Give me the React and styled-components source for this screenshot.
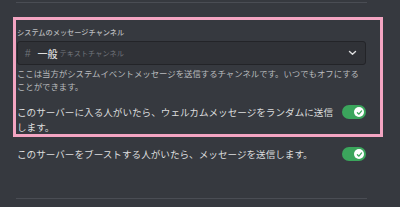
import React from "react";
import styled, { createGlobalStyle } from "styled-components";

const GlobalStyle = createGlobalStyle`
  html, body {
    margin: 0;
    padding: 0;
    background: #36393f;
    font-family: "Noto Sans CJK JP", "Noto Sans", sans-serif;
    overflow: hidden;
  }
`;

const Toggle = ({ on }) => (
  <Switch on={on}>
    <Knob>
      <svg width="7" height="7" viewBox="0 0 10 10">
        <path
          d="M2 5.3 L4.2 7.4 L8 2.8"
          fill="none"
          stroke="#3ba55c"
          strokeWidth="1.8"
          strokeLinecap="round"
          strokeLinejoin="round"
        />
      </svg>
    </Knob>
  </Switch>
);

const SettingRow = ({ children, on }) => (
  <Row>
    <RowText>{children}</RowText>
    <Toggle on={on} />
  </Row>
);

const App = () => {
  return (
    <>
      <GlobalStyle />
      <Page>
        <Divider />
        <Highlight>
          <Label>システムのメッセージチャンネル</Label>
          <Select>
            <Hash>#</Hash>
            <ChannelName>一般</ChannelName>
            <ChannelType>テキストチャンネル</ChannelType>
            <Chevron width="9" height="6" viewBox="0 0 9 6">
              <path
                d="M1.5 1.5 L4.5 4.3 L7.5 1.5"
                fill="none"
                stroke="#dcddde"
                strokeWidth="1.4"
                strokeLinecap="round"
                strokeLinejoin="round"
              />
            </Chevron>
          </Select>
          <Description>
            ここは当方がシステムイベントメッセージを送信するチャンネルです。いつでもオフにすることができます。
          </Description>
          <SettingRow on>
            このサーバーに入る人がいたら、ウェルカムメッセージをランダムに送信します。
          </SettingRow>
        </Highlight>
        <Plain>
          <SettingRow on>
            このサーバーをブーストする人がいたら、メッセージを送信します。
          </SettingRow>
        </Plain>
        <Divider bottom />
      </Page>
    </>
  );
};

const Page = styled.div`
  width: 400px;
  height: 207px;
  padding-top: 2px;
  box-sizing: border-box;
`;

const Divider = styled.div`
  margin-left: 16px;
  margin-top: ${(p) => (p.bottom ? "36px" : "0")};
  width: 351px;
  height: 1px;
  background: #4a4d54;
`;

const Highlight = styled.div`
  margin-top: 14px;
  margin-left: 13px;
  width: 370px;
  box-sizing: border-box;
  border: 3px solid #f3a5c2;
  padding: 7px 14px 0 1px;
`;

const Label = styled.div`
  font-size: 7.2px;
  line-height: 10px;
  height: 10px;
  color: #b9bbbe;
  font-weight: 500;
  white-space: nowrap;
`;

const Select = styled.div`
  margin-top: 4px;
  height: 24px;
  box-sizing: border-box;
  display: flex;
  align-items: center;
  background: #303237;
  border: 1px solid #232428;
  border-radius: 3px;
  padding: 0 0 0 7px;
`;

const Hash = styled.span`
  font-family: "Liberation Sans", sans-serif;
  font-size: 10px;
  color: #72767d;
  margin-right: 7px;
`;

const ChannelName = styled.span`
  font-size: 10px;
  font-weight: 500;
  color: #dcddde;
  margin-right: 2px;
`;

const ChannelType = styled.span`
  font-size: 7.2px;
  color: #72767d;
`;

const Chevron = styled.svg`
  margin-left: auto;
  margin-right: 8px;
`;

const Description = styled.div`
  margin-top: 2px;
  font-size: 8.4px;
  line-height: 13px;
  color: #b9bbbe;
  margin-bottom: 12px;
`;

const Plain = styled.div`
  margin-top: 10px;
  margin-left: 17px;
  width: 349px;
`;

const Row = styled.div`
  display: flex;
  align-items: flex-start;
  justify-content: space-between;
`;

const RowText = styled.div`
  width: 320px;
  font-size: 9.6px;
  line-height: 14.5px;
  color: #dcddde;
  word-break: break-all;
`;

const Switch = styled.div`
  flex-shrink: 0;
  margin-top: 0;
  width: 24px;
  height: 14px;
  border-radius: 7px;
  background: ${(p) => (p.on ? "#3ba55c" : "#72767d")};
  display: flex;
  align-items: center;
  justify-content: ${(p) => (p.on ? "flex-end" : "flex-start")};
  padding: 0 2px;
  box-sizing: border-box;
`;

const Knob = styled.div`
  width: 10px;
  height: 10px;
  border-radius: 50%;
  background: #ffffff;
  display: flex;
  align-items: center;
  justify-content: center;
`;

export default App;
